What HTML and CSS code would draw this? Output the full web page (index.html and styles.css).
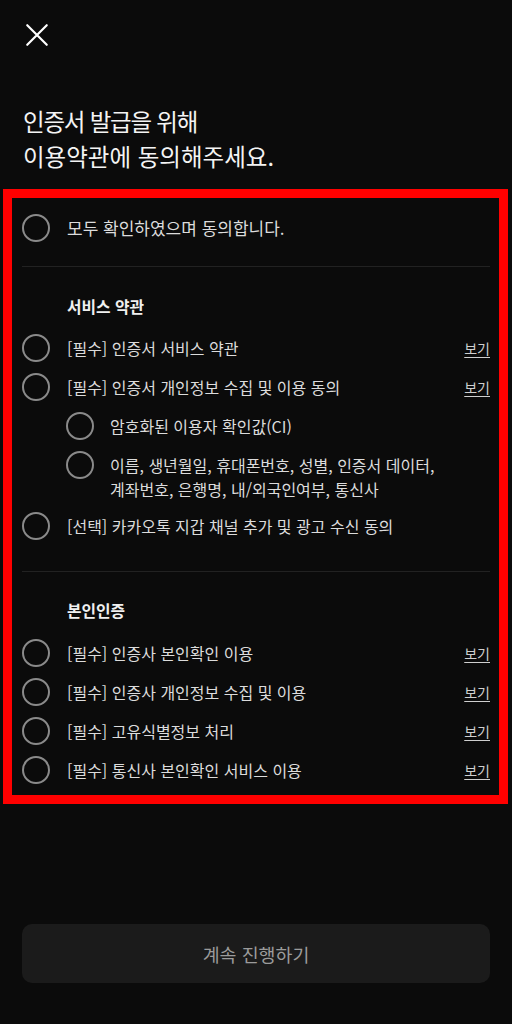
FILE: index.html
```html
<!DOCTYPE html>
<html lang="ko">
<head>
<meta charset="utf-8">
<title>약관 동의</title>
<link rel="stylesheet" href="styles.css">
</head>
<body>
<div class="page">
  <div class="topbar">
    <svg class="close" width="26" height="26" viewBox="0 0 24 24" fill="none" stroke="#ffffff" stroke-width="2" stroke-linecap="round"><path d="M3 3L21 21M21 3L3 21"/></svg>
  </div>
  <h1 class="title"><span class="tight">인증서 발급을 위해</span><br>이용약관에 동의해주세요.</h1>

  <section class="agree">
    <div class="row all"><span class="radio"></span><span class="label">모두 확인하였으며 동의합니다.</span></div>
    <div class="divider"></div>

    <div class="group-title">서비스 약관</div>
    <div class="row"><span class="radio"></span><span class="label">[필수] 인증서 서비스 약관</span><span class="more">보기</span></div>
    <div class="row"><span class="radio"></span><span class="label">[필수] 인증서 개인정보 수집 및 이용 동의</span><span class="more">보기</span></div>
    <div class="row sub"><span class="radio"></span><span class="label">암호화된 이용자 확인값(CI)</span></div>
    <div class="row sub"><span class="radio"></span><span class="label">이름, 생년월일, 휴대폰번호, 성별, 인증서 데이터,<br>계좌번호, 은행명, 내/외국인여부, 통신사</span></div>
    <div class="row"><span class="radio"></span><span class="label">[선택] 카카오톡 지갑 채널 추가 및 광고 수신 동의</span></div>
    <div class="divider mid"></div>

    <div class="group-title second">본인인증</div>
    <div class="row"><span class="radio"></span><span class="label">[필수] 인증사 본인확인 이용</span><span class="more">보기</span></div>
    <div class="row"><span class="radio"></span><span class="label">[필수] 인증사 개인정보 수집 및 이용</span><span class="more">보기</span></div>
    <div class="row"><span class="radio"></span><span class="label">[필수] 고유식별정보 처리</span><span class="more">보기</span></div>
    <div class="row"><span class="radio"></span><span class="label">[필수] 통신사 본인확인 서비스 이용</span><span class="more">보기</span></div>
  </section>

  <button class="cta" type="button">계속 진행하기</button>
</div>
</body>
</html>
```

FILE: styles.css
```css
html, body {
  margin: 0;
  padding: 0;
}

body {
  background: #0b0b0b;
  font-family: "Noto Sans CJK KR", "Noto Sans", sans-serif;
  color: #d9d9d9;
  width: 512px;
  height: 1024px;
  overflow: hidden;
}

.page {
  height: 1024px;
  display: flex;
  flex-direction: column;
}

.topbar {
  padding: 22px 0 0 24px;
  height: 26px;
}

.close {
  display: block;
}

.title {
  margin: 55.5px 0 0 23px;
  font-size: 23.5px;
  line-height: 35px;
  font-weight: 400;
  color: #f4f4f4;
}

.tight {
  letter-spacing: -1.2px;
}

.agree {
  margin: 15.5px 0 0 3px;
  width: 505px;
  height: 615px;
  box-sizing: border-box;
  border: 9px solid #ff0000;
  padding: 10.5px 9px 0 10px;
}

.row {
  display: flex;
  align-items: flex-start;
  padding: 5.5px 0;
}

.radio {
  flex: none;
  width: 28px;
  height: 28px;
  box-sizing: border-box;
  border: 2px solid #8a8a8a;
  border-radius: 50%;
}

.label {
  flex: 1;
  margin: 2px 0 0 17px;
  font-size: 16px;
  line-height: 24px;
  color: #dcdcdc;
  word-break: keep-all;
}

.all .label {
  font-size: 17px;
}

.row.sub {
  padding-left: 44px;
}

.sub .label {
  margin-left: 16px;
}

.more {
  flex: none;
  margin-top: 2px;
  font-size: 14px;
  line-height: 24px;
  color: #cfcfcf;
  text-decoration: underline;
  text-underline-offset: 3px;
}

.divider {
  height: 1px;
  background: #222222;
  margin-top: 18.5px;
}

.divider.mid {
  margin-top: 25.2px;
}

.group-title {
  margin: 27.7px 0 10.1px 45px;
  font-size: 15.8px;
  font-weight: 700;
  line-height: 24px;
  color: #f0f0f0;
}

.group-title.second {
  margin-top: 27px;
}

.cta {
  margin: 120px 22px 0;
  height: 59px;
  border: none;
  border-radius: 10px;
  background: #1b1b1b;
  color: #9b9b9b;
  font-family: "Noto Sans CJK KR", "Noto Sans", sans-serif;
  font-size: 18.4px;
  display: flex;
  align-items: center;
  justify-content: center;
  padding: 0;
}
```
